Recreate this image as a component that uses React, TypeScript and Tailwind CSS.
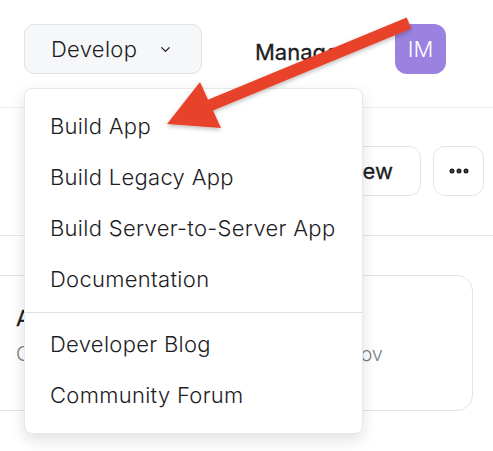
import { ChevronDown, MoreHorizontal } from 'lucide-react';

const menuTop = ['Build App', 'Build Legacy App', 'Build Server-to-Server App', 'Documentation'];
const menuBottom = ['Developer Blog', 'Community Forum'];

export default function App() {
  return (
    <div className="relative h-[451px] w-[493px] overflow-hidden bg-white font-['Inter',sans-serif] text-[#1d1d1f]">
      {/* Top nav */}
      <header className="flex h-[108px] items-start border-b border-[#eceef2] px-6 pt-6">
        <button className="flex h-[50px] w-[178px] items-center gap-[21px] rounded-[10px] border border-[#dfe2e8] bg-[#f6f7f9] pl-[26px] text-[22px] font-light tracking-[0.3px]">
          Develop
          <ChevronDown className="h-[15px] w-[15px]" strokeWidth={2} />
        </button>
        <span className="ml-[53px] mt-[12px] text-[22px] [-webkit-text-stroke:0.3px_#1d1d1f]">Manage</span>
        <div className="ml-auto mr-[23px] flex h-[50px] w-[51px] items-center justify-center rounded-[12px] bg-[#9b82e0] text-[22px] font-light text-white">
          IM
        </div>
      </header>

      {/* Page toolbar behind the menu */}
      <div className="flex h-[128px] items-start justify-end gap-3 border-b border-[#e6e8ec] pr-[9px] pt-[38px]">
        <button className="flex h-[50px] w-[140px] items-center justify-end rounded-[12px] border border-[#e1e4ea] pr-[27px] text-[22px] [-webkit-text-stroke:0.3px_#1d1d1f]">
          New View
        </button>
        <button className="flex h-[50px] w-[51px] items-center justify-center rounded-[12px] border border-[#e1e4ea]">
          <MoreHorizontal className="h-6 w-6" strokeWidth={3} />
        </button>
      </div>

      {/* Card */}
      <div className="ml-[-40px] mr-[20px] mt-[39px] h-[136px] rounded-[16px] border border-[#e1e4ea] pl-[55px] pt-[26px]">
        <div className="text-[22px] [-webkit-text-stroke:0.3px_#1d1d1f]">App Marketplace</div>
        <div className="mt-[4px] flex text-[20px] font-light text-[#7a7f88]">
          <span>Created by IM</span>
          <span className="ml-auto mr-[89px]">20 Nov</span>
        </div>
      </div>

      {/* Dropdown menu */}
      <div className="absolute left-6 top-[88px] w-[339px] rounded-[8px] border border-[#e6e8ec] bg-white pb-3 pt-[12px] shadow-[0_6px_16px_rgba(0,0,0,0.12)]">
        {menuTop.map((item) => (
          <div key={item} className="flex h-[51px] items-center pl-[25px] text-[22px] font-light tracking-[0.3px]">
            {item}
          </div>
        ))}
        <div className="mb-[6px] mt-[7px] border-t border-[#dcdfe5]" />
        {menuBottom.map((item) => (
          <div key={item} className="flex h-[51px] items-center pl-[25px] text-[22px] font-light tracking-[0.3px]">
            {item}
          </div>
        ))}
      </div>

      {/* Annotation arrow */}
      <svg className="pointer-events-none absolute left-0 top-0" width="493" height="451" viewBox="0 0 493 451">
        <defs>
          <filter id="sh" x="-10%" y="-10%" width="120%" height="130%">
            <feDropShadow dx="0" dy="2" stdDeviation="2" floodColor="#000" floodOpacity="0.25" />
          </filter>
        </defs>
        <g filter="url(#sh)" fill="#e8422a">
          <line x1="409" y1="23" x2="206" y2="107" stroke="#e8422a" strokeWidth="12" />
          <polygon points="200,82 167,124 221,128" />
        </g>
      </svg>
    </div>
  );
}
